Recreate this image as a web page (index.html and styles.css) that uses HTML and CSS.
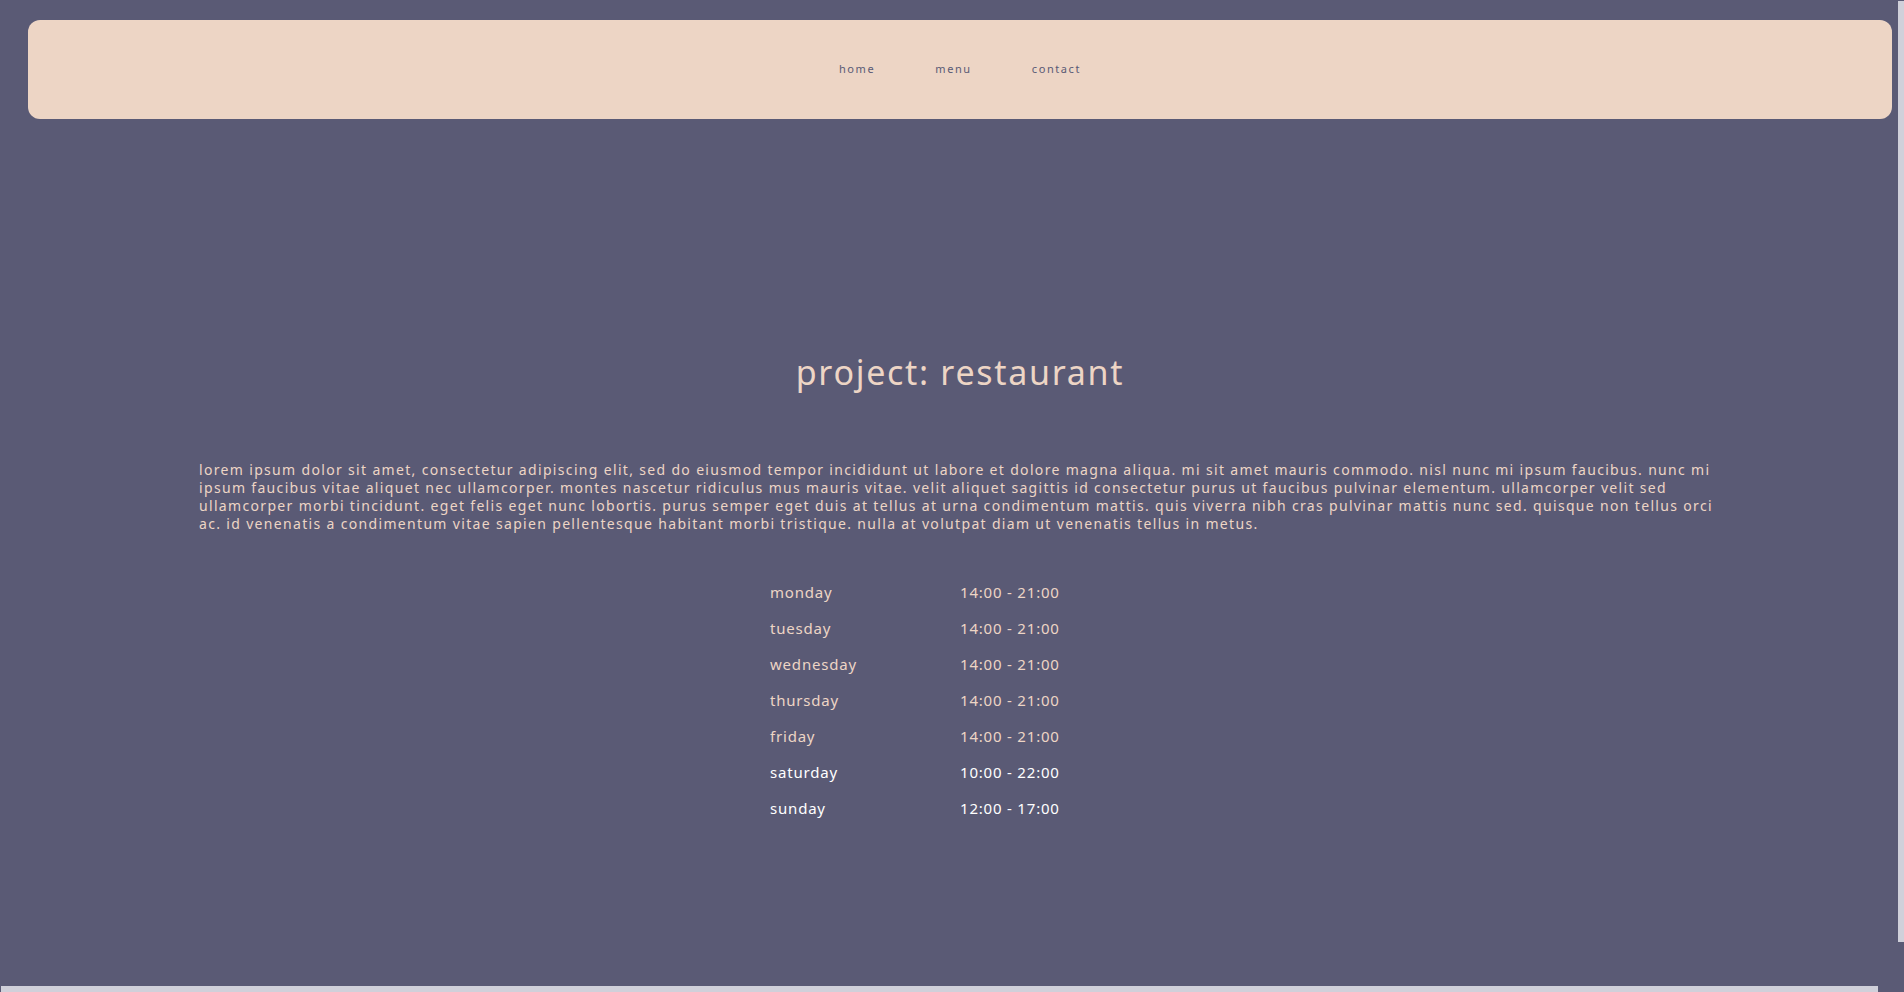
FILE: index.html
```html
<!DOCTYPE html>
<html lang="en">
<head>
<meta charset="utf-8">
<title>project: restaurant</title>
<link rel="stylesheet" href="styles.css">
</head>
<body>
<div class="page">
  <header class="topbar">
    <nav class="nav">
      <a class="nav-link" href="#">home</a>
      <a class="nav-link" href="#">menu</a>
      <a class="nav-link" href="#">contact</a>
    </nav>
  </header>
  <main class="content">
    <h1 class="title">project: restaurant</h1>
    <p class="intro">lorem ipsum dolor sit amet, consectetur adipiscing elit, sed do eiusmod tempor incididunt ut labore et dolore magna aliqua. mi sit amet mauris commodo. nisl nunc mi ipsum faucibus. nunc mi ipsum faucibus vitae aliquet nec ullamcorper. montes nascetur ridiculus mus mauris vitae. velit aliquet sagittis id consectetur purus ut faucibus pulvinar elementum. ullamcorper velit sed ullamcorper morbi tincidunt. eget felis eget nunc lobortis. purus semper eget duis at tellus at urna condimentum mattis. quis viverra nibh cras pulvinar mattis nunc sed. quisque non tellus orci ac. id venenatis a condimentum vitae sapien pellentesque habitant morbi tristique. nulla at volutpat diam ut venenatis tellus in metus.</p>
    <table class="hours">
      <tr><td class="day">monday</td><td class="time">14:00 - 21:00</td></tr>
      <tr><td class="day">tuesday</td><td class="time">14:00 - 21:00</td></tr>
      <tr><td class="day">wednesday</td><td class="time">14:00 - 21:00</td></tr>
      <tr><td class="day">thursday</td><td class="time">14:00 - 21:00</td></tr>
      <tr><td class="day">friday</td><td class="time">14:00 - 21:00</td></tr>
      <tr class="weekend"><td class="day">saturday</td><td class="time">10:00 - 22:00</td></tr>
      <tr class="weekend"><td class="day">sunday</td><td class="time">12:00 - 17:00</td></tr>
    </table>
  </main>
</div>
<div class="scroll-v"></div>
<div class="scroll-h"></div>
</body>
</html>
```

FILE: styles.css
```css
html {
  background: #5a5a75;
}
body {
  margin: 0;
  background: #5a5a75;
  font-family: "Noto Sans", "DejaVu Sans", sans-serif;
  color: #edd5c5;
  overflow: hidden;
}
.page {
  height: 992px;
  padding: 20px 12px 0 28px;
  box-sizing: border-box;
}
.topbar {
  height: 99px;
  background: #edd5c5;
  border-radius: 12px;
  display: flex;
  align-items: center;
  justify-content: center;
}
.nav {
  display: flex;
  gap: 60px;
  margin-bottom: 2px;
}
.nav-link {
  color: #5a5a75;
  text-decoration: none;
  font-size: 11px;
  letter-spacing: 1.6px;
}
.content {
  width: 1522px;
  margin: 0 0 0 171px;
  display: flex;
  flex-direction: column;
  align-items: center;
}
.title {
  margin: 231px 0 0;
  font-size: 34px;
  font-weight: 400;
  letter-spacing: 1.7px;
  line-height: 44px;
}
.intro {
  align-self: stretch;
  margin: 67px 0 0;
  font-size: 14px;
  line-height: 18px;
  letter-spacing: 1.33px;
  text-align: left;
}
.hours {
  align-self: flex-start;
  margin: 41px 0 0 571px;
  border-collapse: collapse;
  font-size: 15px;
  letter-spacing: 0.8px;
}
.hours td {
  padding: 0;
  height: 36px;
}
.hours .day {
  width: 190px;
}
.weekend {
  color: #ffffff;
}
.scroll-v {
  position: fixed;
  top: 1px;
  right: 0;
  width: 6px;
  height: 941px;
  background: #d0d0da;
}
.scroll-h {
  position: fixed;
  left: 1px;
  bottom: 0;
  width: 1877px;
  height: 6px;
  background: #d0d0da;
}
```
